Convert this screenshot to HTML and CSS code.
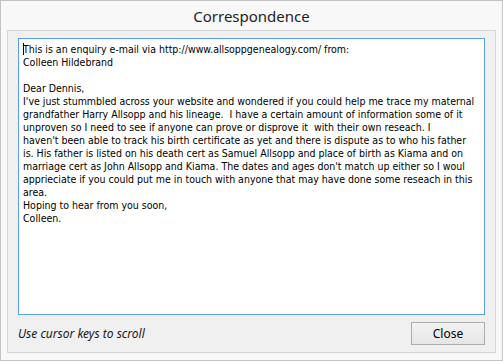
FILE: index.html
```html
<!DOCTYPE html>
<html lang="en">
<head>
    <meta charset="UTF-8">
    <title>Correspondence</title>
    <link rel="stylesheet" href="styles.css">
</head>
<body>
    <div class="window">
        <div class="title-bar">Correspondence</div>

        <div class="panel">
            <div class="message"><span class="caret"></span>This is an enquiry e-mail via http://www.allsoppgenealogy.com/ from:
Colleen Hildebrand

Dear Dennis,
I've just stummbled across your website and wondered if you could help me trace my maternal
grandfather Harry Allsopp and his lineage.  I have a certain amount of information some of it
unproven so I need to see if anyone can prove or disprove it  with their own reseach. I
haven't been able to track his birth certificate as yet and there is dispute as to who his father
is. His father is listed on his death cert as Samuel Allsopp and place of birth as Kiama and on
marriage cert as John Allsopp and Kiama. The dates and ages don't match up either so I woul
apprieciate if you could put me in touch with anyone that may have done some reseach in this
area.
Hoping to hear from you soon,
Colleen.</div>

            <div class="footer">
                <span class="hint">Use cursor keys to scroll</span>
                <button class="close-button">Close</button>
            </div>
        </div>
    </div>
</body>
</html>
```

FILE: styles.css
```css
:root {
    --frame: #c3c3c3;
    --panel: #f0f0f0;
    --panel-border: #d6d6d6;
    --focus: #5a9fe6;
    --text: #000000;
}

* {
    margin: 0;
    padding: 0;
    box-sizing: border-box;
}

body {
    background: #f8f8f8;
    font-family: 'Noto Sans', 'Open Sans', sans-serif;
}

.window {
    width: 503px;
    height: 361px;
    border: 1px solid var(--frame);
    background: #f8f8f8;
    padding: 0 6px 7px 6px;
    display: flex;
    flex-direction: column;
}

.title-bar {
    height: 29px;
    display: flex;
    align-items: center;
    justify-content: center;
    font-size: 15px;
    color: #1e1e1e;
    padding-top: 1px;
}

.panel {
    flex: 1;
    background: var(--panel);
    border: 1px solid var(--panel-border);
    padding: 7px 10px 0 10px;
    display: flex;
    flex-direction: column;
}

.message {
    height: 277px;
    background: #ffffff;
    border: 1px solid var(--focus);
    padding: 4px 4px 3px 4px;
    white-space: pre;
    font-family: 'DejaVu Sans Condensed', 'DejaVu Sans', sans-serif;
    font-stretch: condensed;
    font-size: 10.5px;
    line-height: 13px;
    color: var(--text);
    overflow: hidden;
}

.caret {
    display: inline-block;
    width: 1px;
    height: 12px;
    background: #000;
    vertical-align: -2px;
    margin-right: -1px;
}

.footer {
    flex: 1;
    display: flex;
    align-items: center;
    justify-content: space-between;
    padding-bottom: 1px;
}

.hint {
    font-style: italic;
    font-size: 12px;
    color: #1a1a1a;
}

.close-button {
    width: 74px;
    height: 23px;
    border: 1px solid #adadad;
    background: linear-gradient(#f2f2f2, #e6e6e6);
    font-family: 'Noto Sans', 'Open Sans', sans-serif;
    font-size: 12px;
    color: #000;
    cursor: pointer;
}
```
